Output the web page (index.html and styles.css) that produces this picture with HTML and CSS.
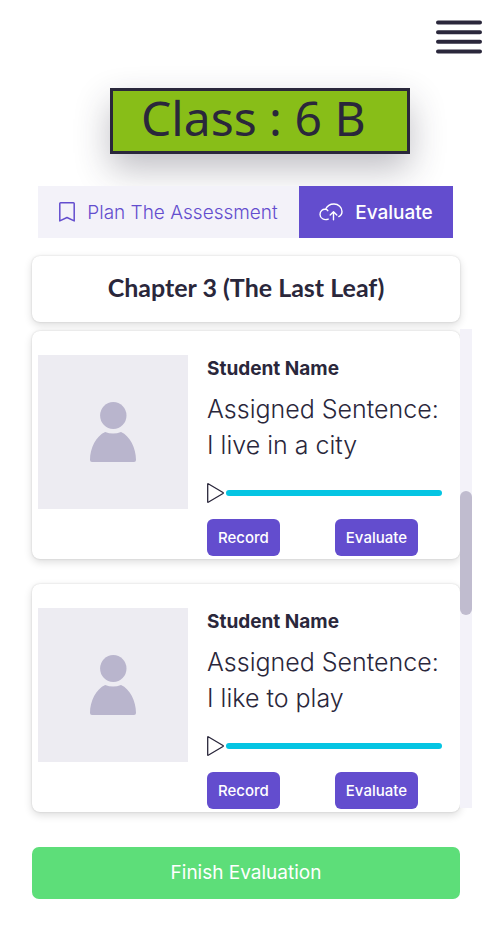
FILE: index.html
```html
<!DOCTYPE html>
<html lang="en">
<head>
<meta charset="utf-8">
<meta name="viewport" content="width=device-width, initial-scale=1">
<title>Class 6 B</title>
<link rel="stylesheet" href="styles.css">
</head>
<body>
<header class="topbar">
  <button class="menu" type="button" aria-label="Menu">
    <svg width="46" height="34" viewBox="0 0 46 34" fill="none" stroke="currentColor" stroke-width="4" stroke-linecap="round"><path d="M2 2.5h42M2 12.2h42M2 21.8h42M2 31.5h42"/></svg>
  </button>
</header>
<main class="page">
  <h1 class="class-name">Class : 6 B</h1>
  <nav class="tabs">
    <a class="tab tab-plan" href="#plan">
      <svg width="16" height="20" viewBox="0 0 16 20" fill="none" stroke="currentColor" stroke-width="1.5" stroke-linejoin="round"><path d="M.8 1.6Q.8.8 1.6.8h12.8q.8 0 .8.8v17.3L8 15.5.8 18.9z"/></svg>
      <span>Plan The Assessment</span>
    </a>
    <a class="tab tab-evaluate" href="#evaluate" aria-current="page">
      <svg width="24" height="18" viewBox="0 0 24 18" fill="none" stroke="currentColor" stroke-width="1.4" stroke-linecap="round" stroke-linejoin="round"><path d="M9.300 16.100C5 17.600 1 15.200 1 11.500 1 8.200 3.600 6 6.500 6.300 7.500 6.400 8.400 7 8.800 7.700M6.600 6.200C8.200 2.600 11.500 1 15 1c4.500 0 8 3.400 8 7.400 0 2.600-1.300 4.300-3.200 5.200M14.500 16.800V8.800M11.200 12l3.300-3.300 3.300 3.300"/></svg>
      <span>Evaluate</span>
    </a>
  </nav>
  <h2 class="chapter">Chapter 3 (The Last Leaf)</h2>
  <section class="roster" aria-label="Students">
    <div class="cards">
      <article class="card">
        <div class="photo">
          <svg width="46" height="60" viewBox="0 0 46 60" fill="currentColor"><ellipse cx="23.300" cy="13.500" rx="13.200" ry="13.500"/><path d="M15.200 30Q23 33.200 31 30C40 34 46 46 46 58q0 2-2 2H2q-2 0-2-2C0 46 6 34 15.200 30z"/></svg>
        </div>
        <div class="details">
          <h3 class="student">Student Name</h3>
          <p class="sentence">Assigned Sentence:<br>I live in a city</p>
          <div class="player">
            <button class="play" type="button" aria-label="Play"><svg width="17" height="20" viewBox="0 0 17 20" fill="none" stroke="currentColor" stroke-width="1.3" stroke-linejoin="round"><path d="M1.200.8 16 9.500q.6.500 0 1L1.200 19.200Q.7 19.400.7 18.800V1.200Q.7.6 1.200.8z"/></svg></button>
            <input class="seek" type="range" value="0" aria-label="Playback position">
          </div>
          <div class="actions">
            <button class="action" type="button">Record</button>
            <button class="action" type="button">Evaluate</button>
          </div>
        </div>
      </article>
      <article class="card">
        <div class="photo">
          <svg width="46" height="60" viewBox="0 0 46 60" fill="currentColor"><ellipse cx="23.300" cy="13.500" rx="13.200" ry="13.500"/><path d="M15.200 30Q23 33.200 31 30C40 34 46 46 46 58q0 2-2 2H2q-2 0-2-2C0 46 6 34 15.200 30z"/></svg>
        </div>
        <div class="details">
          <h3 class="student">Student Name</h3>
          <p class="sentence">Assigned Sentence:<br>I like to play</p>
          <div class="player">
            <button class="play" type="button" aria-label="Play"><svg width="17" height="20" viewBox="0 0 17 20" fill="none" stroke="currentColor" stroke-width="1.3" stroke-linejoin="round"><path d="M1.200.8 16 9.500q.6.500 0 1L1.200 19.200Q.7 19.400.7 18.800V1.200Q.7.6 1.200.8z"/></svg></button>
            <input class="seek" type="range" value="0" aria-label="Playback position">
          </div>
          <div class="actions">
            <button class="action" type="button">Record</button>
            <button class="action" type="button">Evaluate</button>
          </div>
        </div>
      </article>
    </div>
    <div class="scrollbar"><div class="thumb"></div></div>
  </section>
  <button class="finish" type="button">Finish Evaluation</button>
</main>
</body>
</html>
```
FILE: styles.css
```css
:root {
  --ink: #2a273b;
  --violet: #634dce;
  --mist: #f3f2f9;
}

* {
  box-sizing: border-box;
}

body {
  margin: 0;
  background: #fff;
  color: var(--ink);
  font-family: Inter, "Open Sans", sans-serif;
}

h1, h2, h3, p {
  margin: 0;
}

button {
  border: 0;
  font: inherit;
  cursor: pointer;
}

svg {
  display: block;
  flex: none;
}

.topbar {
  display: flex;
  justify-content: flex-end;
  padding: 20px 10px 34px;
}

.menu,
.play {
  padding: 0;
  background: none;
  color: var(--ink);
}

.page {
  padding: 0 32px 40px;
}

.class-name {
  margin: 0 50px 32px 78px;
  padding: 0 28px 6px;
  border: 3px solid var(--ink);
  background: #88be18;
  box-shadow: 0 15px 35px rgba(42, 39, 59, 0.3);
  font: 400 48px/54px "Noto Sans", sans-serif;
}

.tabs {
  display: flex;
  margin: 0 7px 18px 6px;
  position: relative;
}

.tab {
  display: flex;
  align-items: center;
  justify-content: center;
  gap: 12px;
  height: 52px;
  font-size: 19px;
  text-decoration: none;
  white-space: nowrap;
}

.tab-plan {
  flex: 261;
  background: var(--mist);
  color: var(--violet);
  font-weight: 300;
}

.tab-evaluate {
  flex: 154;
  background: var(--violet);
  color: #fff;
  font-weight: 500;
}

.chapter,
.card {
  border-radius: 8px;
  background: #fff;
  box-shadow: 0 0 2px rgba(0, 0, 0, 0.16), 0 3px 8px rgba(0, 0, 0, 0.14);
}

.chapter {
  margin-bottom: 7px;
  padding: 14px 16px 18px;
  font: 700 25px/34px Lato, sans-serif;
  text-align: center;
}

.roster {
  display: flex;
  margin-right: -12px;
}

.cards {
  flex: 1;
  display: grid;
  gap: 25px;
  padding-top: 2px;
}

.card {
  display: flex;
  gap: 19px;
  padding: 24px 18px 3px 6px;
}

.photo {
  display: grid;
  place-items: center;
  flex: none;
  width: 150px;
  height: 154px;
  background: #edecf2;
  color: #b9b5cd;
}

.details {
  flex: 1;
  min-width: 0;
}

.student {
  margin-bottom: 8px;
  font-size: 19px;
  line-height: 28px;
  font-weight: 700;
}

.sentence {
  margin-bottom: 20px;
  font-size: 25px;
  line-height: 36px;
  font-weight: 300;
  white-space: nowrap;
}

.player {
  display: flex;
  align-items: center;
  gap: 2px;
  margin-bottom: 16px;
}

.seek {
  appearance: none;
  flex: 1;
  min-width: 0;
  height: 6px;
  margin: 0;
  border-radius: 3px;
  background: #05c5e3;
}

.seek::-webkit-slider-thumb {
  appearance: none;
  width: 0;
  height: 0;
}

.actions {
  display: flex;
  justify-content: space-between;
  padding-right: 24px;
}

.action {
  padding: 8px 11px;
  border-radius: 6px;
  background: var(--violet);
  color: #fff;
  font-size: 15px;
  line-height: 21px;
  font-weight: 500;
}

.scrollbar {
  width: 12px;
  margin-bottom: 4px;
  padding-top: 162px;
  background: var(--mist);
}

.thumb {
  height: 124px;
  border-radius: 6px;
  background: #c0bccf;
}

.finish {
  width: 100%;
  margin-top: 35px;
  padding: 12px;
  border-radius: 7px;
  background: #5dde79;
  color: #fff;
  font-size: 19px;
  line-height: 28px;
}
```
